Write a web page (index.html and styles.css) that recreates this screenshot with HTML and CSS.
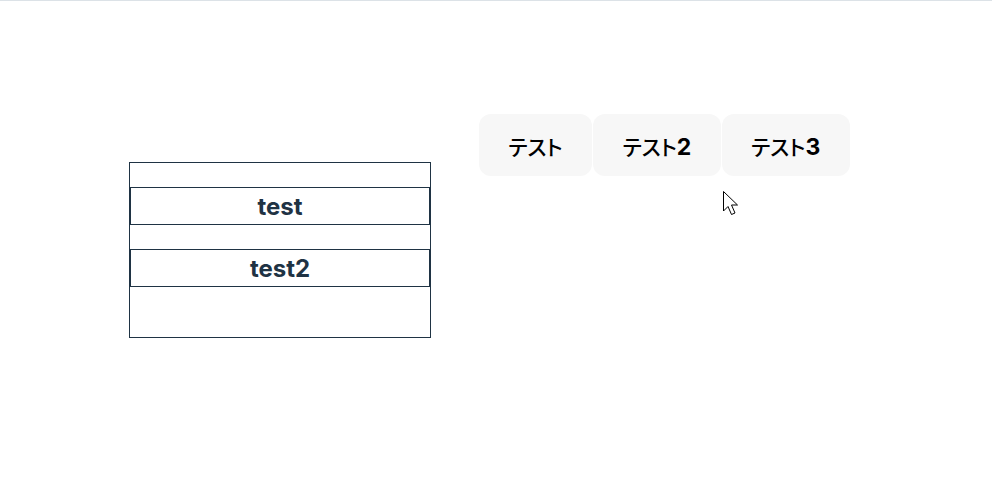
FILE: index.html
```html
<!DOCTYPE html>
<html lang="ja">
<head>
<meta charset="utf-8">
<link rel="stylesheet" href="styles.css">
</head>
<body>
<div class="page">
  <div class="list">
    <div class="item">test</div>
    <div class="item">test2</div>
  </div>
  <div class="tabs">
    <div class="tab">テスト</div>
    <div class="tab">テスト<span class="num">2</span></div>
    <div class="tab">テスト<span class="num">3</span></div>
  </div>
</div>
<svg class="cursor" width="20" height="28" viewBox="0 0 20 28">
  <path d="M1.5 1.5 L1.5 21 L6 16.5 L9.5 24.5 L13 23 L9.5 15 L15.5 15 Z" fill="#fff" stroke="#000" stroke-width="1" stroke-linejoin="miter"/>
</svg>
</body>
</html>
```
FILE: styles.css
```css
html, body {
  margin: 0;
  padding: 0;
  background: #fff;
}
body {
  border-top: 1px solid #dce2e7;
  height: 494px;
  position: relative;
  overflow: hidden;
  font-family: Inter, "Noto Sans CJK JP", sans-serif;
}
.page {
  display: flex;
  align-items: flex-start;
  padding: 113px 0 0 129px;
  gap: 48px;
}
.list {
  margin-top: 48px;
  width: 300px;
  height: 150px;
  border: 1px solid #1f3344;
  display: flex;
  flex-direction: column;
  gap: 24px;
  padding-top: 24px;
}
.item {
  height: 36px;
  border: 1px solid #1f3344;
  display: flex;
  align-items: center;
  justify-content: center;
  font-size: 24px;
  font-weight: 700;
  color: #1f3344;
}
.tabs {
  display: flex;
  gap: 1px;
}
.tab {
  box-sizing: border-box;
  height: 62px;
  padding: 2px 29.5px 0;
  line-height: 60px;
  background: #f7f7f7;
  border-radius: 12px;
  text-align: center;
  white-space: nowrap;
  font-size: 21px;
  font-weight: 500;
  color: #000;
  font-family: "Noto Sans CJK JP", sans-serif;
  font-feature-settings: "palt";
}
.num {
  font-family: Inter, sans-serif;
  font-weight: 700;
  font-size: 23px;
}
.cursor {
  position: absolute;
  left: 722px;
  top: 189px;
}
```
